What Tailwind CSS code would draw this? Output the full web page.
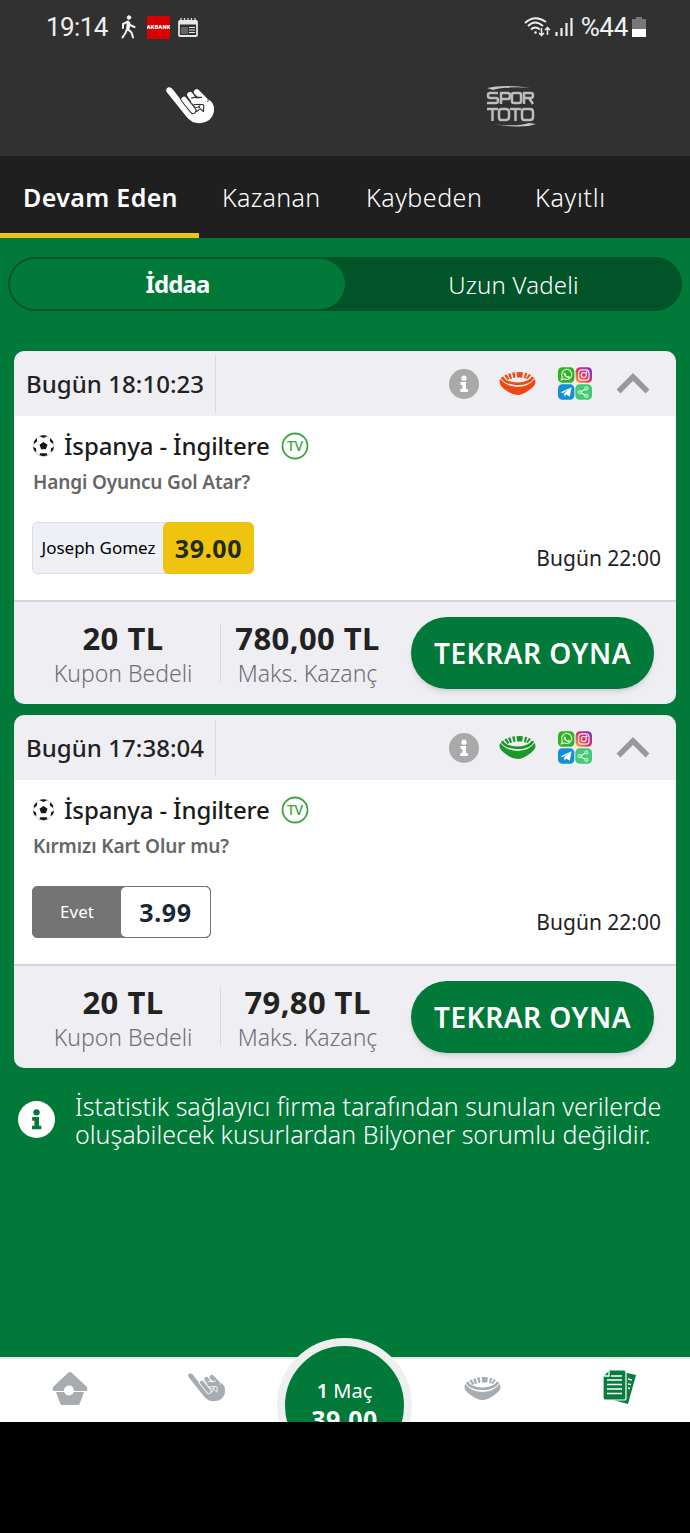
<!DOCTYPE html>
<html lang="tr">
<head>
<meta charset="utf-8">
<title>Kuponlarım</title>
<script src="https://cdn.jsdelivr.net/npm/@tailwindcss/browser@4"></script>
</head>
<body class="w-[690px] h-[1533px] overflow-hidden bg-black font-['Noto_Sans',sans-serif] whitespace-nowrap">
<svg class="absolute w-0 h-0">
  <symbol id="hand" viewBox="0 0 142 110">
    <path fill="currentColor" d="M1 14Q-2 3 7 1q7-1 12 5l33 42 30-8 25-15 10 6q26 12 26 37-3 35-42 40-25 1-41-20z"/>
    <g fill="none" stroke-linecap="round" stroke-linejoin="round">
      <path d="M91 15l24 24" stroke="var(--gap)" stroke-width="22"/><path d="M91 15l24 24" stroke="currentColor" stroke-width="17"/>
      <path d="M71 23l20 28" stroke="var(--gap)" stroke-width="22"/><path d="M71 23l20 28" stroke="currentColor" stroke-width="17"/>
      <path d="M53 36l27 34" stroke="var(--gap)" stroke-width="21"/><path d="M53 36l27 34" stroke="currentColor" stroke-width="15"/>
      <path d="M82 42h28l18 18-8 22" stroke="currentColor" stroke-width="15"/>
      <path d="M76 33q3-2 9-2h20M84 52h24q4 0 4 4l-1 17-9-8-5-7M88 73q6-1 10-6" stroke="var(--gap)" stroke-width="3.500"/>
    </g>
  </symbol>
  <symbol id="stadium" viewBox="0 0 108 68">
    <path fill="currentColor" d="M1 31q-1-7 3-10 14 22 50 23 36-1 50-23 4 3 3 11-1 10-19 22-18 14-34 14T20 54Q2 42 1 31z"/>
    <path d="M8 15q10 19 46 20 36-1 46-20" fill="none" stroke="currentColor" stroke-width="8"/>
    <path fill="currentColor" d="M15 11l6-4 9 13-5 4zM26 6l7-2 5 15-6 2zM38 2l8-1 2 16-6 1zM51 1q8-2 19 0l-2 15q-7 1-15 0zM76 2l7 2-5 15-5-1zM88 6l6 3-10 12-5-2z"/>
  </symbol>
  <symbol id="info" viewBox="0 0 30 30"><circle cx="15" cy="15" r="15" fill="currentColor"/><g fill="var(--gap)"><circle cx="15" cy="9.200" r="2.600"/><path d="M11.500 13h5.500v7h1.900v3h-7.600v-3h2v-4h-1.800z"/></g></symbol>
  <linearGradient id="ig" x1="0" y1="1" x2="1" y2="0"><stop offset="0" stop-color="#ffb13d"/><stop offset=".45" stop-color="#f02d63"/><stop offset="1" stop-color="#5b38d6"/></linearGradient>
  <symbol id="share" viewBox="0 0 102 98">
    <rect width="49" height="47" rx="13" fill="#2db51e"/><rect x="53" width="49" height="47" rx="13" fill="url(#ig)"/><rect y="51" width="49" height="47" rx="13" fill="#128fd8"/><rect x="52" y="51" width="50" height="47" rx="13" fill="#43ca73"/>
    <g fill="none" stroke="#e8f5e8" stroke-width="3.500"><path d="M10 38l3-9a15 15 0 1 1 6 6z"/><rect x="62" y="8" width="31" height="31" rx="9"/><circle cx="77.500" cy="23.500" r="7.500"/><path d="M66 75l18-10M66 75l18 11"/></g>
    <path d="M19 17q3-3 4 1l1 3-1 2q2 4 6 5l3-2 4 3q-2 6-9 3-9-5-10-11 0-3 2-4z" fill="#e8f5e8"/><circle cx="86" cy="15" r="2.500" fill="#fff"/>
    <path d="M8 75l33-15-6 29-10-7-5 6-2-9 17-14-21 13z" fill="#fff"/><g fill="#6fd894" stroke="#d5f5e0" stroke-width="3"><circle cx="65" cy="75" r="5"/><circle cx="85" cy="64" r="5"/><circle cx="85" cy="86" r="5"/></g>
  </symbol>
  <symbol id="ball" viewBox="0 0 66 66"><circle cx="33" cy="33" r="31" fill="#fff" stroke="#bbb" stroke-width="2"/><g fill="#161616"><path d="M33 21l12 8-5 14H26l-5-14z"/><path d="M21 3q12-4 24 0l-12 6zM4 22q2-8 9-12l1 9-9 8zM62 22q-2-8-9-12l-1 9 9 8zM6 48q-4-7-4-13l8 5 2 11zM60 48q4-7 4-13l-8 5-2 11zM23 55h20l2 6q-12 5-24 0z"/></g></symbol>
  <symbol id="chev" viewBox="0 0 34 22"><path d="M2.500 18.500L17 4l14.500 14.500" fill="none" stroke="#999" stroke-width="5.500"/></symbol>
</svg>

<header class="h-[156px] bg-[#313131] text-white">
  <div class="h-[54px] flex items-center pl-[46px] pr-[44px] font-[Roboto]">
    <span class="w-[62px] text-[26px] leading-[56px] tracking-[-0.6px] text-[#eee]">19:14</span>
    <svg class="ml-[13px] w-[15px] h-[24px]" viewBox="0 0 15 24" fill="none" stroke="#f2f2f2" stroke-width="2" stroke-linecap="round" stroke-linejoin="round"><circle cx="8" cy="2.500" r="1.800" fill="#f2f2f2" stroke-width="1"/><path d="M7 6.500L6 14l-1.500 4L1.500 22.500M6.500 14l4 3.500 1.500 5M2 13V9l5-2.500L9 10l4.500 2M8.500 8l-1 6" /></svg>
    <span class="ml-[11px] w-[23px] h-[23px] bg-[#d80000] text-white text-[6px] leading-[23px] font-black overflow-hidden flex justify-center"><span class="scale-y-75">AKBANK</span></span>
    <svg class="ml-[8px] w-[20px] h-[19px]" viewBox="0 0 20 19" fill="none" stroke="#e6e6e6"><rect x="1" y="3" width="18" height="15" rx="1" stroke-width="1.800"/><path d="M1 4.500h18" stroke-width="4"/><path d="M3 0v3M6.500 0v3M10 0v3M13.500 0v3M17 0v3" stroke-width="1.200"/><path d="M11 9.500h6M11 12h6M11 14.500h6" stroke-width="1.200"/><path d="M3 9h7v7H3z" stroke="none" fill="#666"/></svg>
    <span class="flex-1"></span>
    <svg class="w-[50px] h-[22px] mr-[7px]" viewBox="0 0 50 22" fill="none" stroke="#eee" stroke-width="1.900"><path d="M1 7Q11-2 22 6M4 10Q11 3 19 10M7 13.500q4-4 9 0"/><circle cx="11.500" cy="16.500" r="1.300" fill="#eee" stroke="none"/><path d="M17.500 12v7m-2.500-2l2.500 2.500L20 17M23.500 19v-7M21 14l2.500-2.500L26 14" stroke-width="1.500"/><path d="M32.500 20v-4M37.500 20v-8M42.500 20V7M47.500 20V2" stroke-width="2.200"/></svg>
    <span class="text-[26px] leading-[56px] tracking-[-0.3px] text-[#f2f2f2]">%44</span>
    <svg class="ml-[4px] w-[14px] h-[20px]" viewBox="0 0 14 20"><path d="M4 0h6v2h4v18H0V2h4z" fill="#777"/><path d="M0 12h14v8H0z" fill="#fff"/></svg>
  </div>
  <div class="h-[102px] flex items-start">
    <div class="w-1/2 pt-[33px] pl-[166px]"><svg class="w-[48px] h-[37px] [--gap:#313131]"><use href="#hand"/></svg></div>
    <div class="w-1/2 pt-[31px] pl-[141px]"><svg class="w-[51px] h-[43px]" viewBox="0 0 51 43"><path d="M1 3Q18-1 45 3 20 1 7 5zM50 39q-13 5-43 0 24 3 36-1z" fill="#c8c8c8"/><g fill="none" stroke="#bdbdbd" stroke-width="2.500" stroke-linejoin="round"><path d="M12 8H4Q2 8 2 10.500T4 13h6q2 0 2 2.500T10 18H1M15 19V8h7q2 0 2 3t-2 3h-7M28 8h5q2 0 2 2v6q0 2-2 2h-5q-2 0-2-2v-6q0-2 2-2zM38 19V8h7q2 0 2 2.500T45 13h-7m5 0l4 6M1 24h11M6.500 24v12M15 24h5q3 0 3 3v5q0 3-3 3h-5q-2 0-2-3v-5q0-3 2-3zM24 24h11M29.500 24v12M38 24h6q3 0 3 3v5q0 3-3 3h-6q-2 0-2-3v-5q0-3 2-3z"/></g></svg></div>
  </div>
</header>

<nav class="h-[82px] bg-[#1f1f1f] text-white text-[25px] leading-[82px] flex">
  <div class="w-[199px] h-[82px] pl-[23px] border-b-[5px] border-[#ecc31c] font-semibold tracking-[0.35px]">Devam Eden</div>
  <div class="pl-[23px] w-[143px] font-[350] tracking-[0.3px]">Kazanan</div>
  <div class="pl-[24px] w-[169px] font-[350] tracking-[0.5px]">Kaybeden</div>
  <div class="pl-[24px] font-[350] tracking-[0.7px]">Kayıtlı</div>
</nav>

<main class="h-[1119px] bg-[#007939] pt-[19px]">
  <div class="ml-2 w-[674px] h-[54px] rounded-full bg-[#005428] p-[2px] pr-0 flex text-white text-[24px] leading-[51px] text-center">
    <div class="w-[335px] h-[50px] rounded-full bg-[#007939] font-bold leading-[49px] tracking-[-0.9px]">İddaa</div>
    <div class="flex-1 font-[350] tracking-[0.2px]">Uzun Vadeli</div>
  </div>

  <section class="mt-[40px] ml-[14px] w-[662px] h-[353px] rounded-[10px] bg-[#efeef3] overflow-hidden text-[#222]">
    <div class="h-[65px] flex items-center pl-[12px] pr-[26px]">
      <span class="w-[189px] text-[24px] font-medium leading-[64px] tracking-[0.05px]">Bugün 18:10:23</span>
      <i class="w-px h-[57px] bg-[#d9d8df]"></i><span class="flex-1"></span>
      <svg class="w-[30px] h-[30px] text-[#a9a9a9] [--gap:#fff]"><use href="#info"/></svg>
      <svg class="ml-[20px] w-[37px] h-[23px] text-[#f0490f]"><use href="#stadium"/></svg>
      <svg class="ml-[22px] w-[34px] h-[33px]"><use href="#share"/></svg>
      <svg class="ml-[24px] w-[34px] h-[22px]"><use href="#chev"/></svg>
    </div>
    <div class="h-[184px] bg-white pl-[18px] pr-[15px] pt-[12px]">
      <div class="flex h-[36px] items-center"><svg class="w-[23px] h-[22px]"><use href="#ball"/></svg><span class="ml-[9px] w-[217px] text-[24px] font-medium tracking-[-0.13px] text-[#1b1b1b]">İspanya - İngiltere</span><svg class="w-[28px] h-[28px]" viewBox="0 0 28 28"><circle cx="14" cy="14" r="12.500" fill="none" stroke="#3da53d" stroke-width="1.800"/><text x="14" y="19" text-anchor="middle" textLength="16" font-family="Noto Sans" font-size="14" font-weight="500" fill="#3da53d">TV</text></svg></div>
      <div class="pl-px h-[58px] leading-[36px] text-[19px] font-semibold tracking-[-0.15px] text-[#666]">Hangi Oyuncu Gol Atar?</div>
      <div class="flex justify-between">
        <div class="w-[222px] h-[52px] flex border border-[#dcdce3] rounded-[5px] bg-[#efeff6] leading-[50px] text-center"><span class="flex-1 text-[17px] text-black">Joseph Gomez</span><span class="-m-px w-[91px] h-[52px] leading-[52px] rounded-[6px] bg-[#efc40f] text-[25px] font-bold tracking-[0.7px] text-[#222b16]">39.00</span></div>
        <span class="pt-[9px] text-[21px] leading-[54px]">Bugün 22:00</span>
      </div>
    </div>
    <div class="h-[104px] border-t-2 border-[#d4d3de] flex items-center pr-[22px]">
      <div class="w-[206px] pl-[12px] pt-[4px] text-center"><div class="text-[31px] leading-[35px] font-bold tracking-[0.5px]">20 TL</div><div class="text-[23px] leading-[34px] font-[350] text-[#6f6f74]">Kupon Bedeli</div></div>
      <i class="w-px h-[58px] bg-[#d9d8df]"></i>
      <div class="w-[173px] pt-[4px] text-center"><div class="text-[31px] leading-[35px] font-bold tracking-[0.4px]">780,00 TL</div><div class="text-[23px] leading-[34px] font-[350] text-[#6f6f74]">Maks. Kazanç</div></div>
      <div class="ml-[17px] w-[243px] h-[72px] rounded-full bg-[#007939] shadow-md text-white text-center text-[28px] leading-[73px] font-semibold tracking-[0.5px]">TEKRAR OYNA</div>
    </div>
  </section>

  <section class="mt-[11px] ml-[14px] w-[662px] h-[353px] rounded-[10px] bg-[#efeef3] overflow-hidden text-[#222]">
    <div class="h-[65px] flex items-center pl-[12px] pr-[26px]">
      <span class="w-[189px] text-[24px] font-medium leading-[64px] tracking-[0.05px]">Bugün 17:38:04</span>
      <i class="w-px h-[57px] bg-[#d9d8df]"></i><span class="flex-1"></span>
      <svg class="w-[30px] h-[30px] text-[#a9a9a9] [--gap:#fff]"><use href="#info"/></svg>
      <svg class="ml-[20px] w-[37px] h-[23px] text-[#1c982b]"><use href="#stadium"/></svg>
      <svg class="ml-[22px] w-[34px] h-[33px]"><use href="#share"/></svg>
      <svg class="ml-[24px] w-[34px] h-[22px]"><use href="#chev"/></svg>
    </div>
    <div class="h-[184px] bg-white pl-[18px] pr-[15px] pt-[12px]">
      <div class="flex h-[36px] items-center"><svg class="w-[23px] h-[22px]"><use href="#ball"/></svg><span class="ml-[9px] w-[217px] text-[24px] font-medium tracking-[-0.13px] text-[#1b1b1b]">İspanya - İngiltere</span><svg class="w-[28px] h-[28px]" viewBox="0 0 28 28"><circle cx="14" cy="14" r="12.500" fill="none" stroke="#3da53d" stroke-width="1.800"/><text x="14" y="19" text-anchor="middle" textLength="16" font-family="Noto Sans" font-size="14" font-weight="500" fill="#3da53d">TV</text></svg></div>
      <div class="pl-px h-[58px] leading-[36px] text-[19px] font-semibold tracking-[-0.1px] text-[#666]">Kırmızı Kart Olur mu?</div>
      <div class="flex justify-between">
        <div class="w-[179px] h-[52px] flex border border-[#747474] rounded-[5px] bg-[#747474] leading-[50px] text-center"><span class="flex-1 text-[17px] text-white">Evet</span><span class="w-[89px] h-[50px] leading-[50px] rounded-[5px] bg-white text-[25px] font-bold tracking-[0.7px] text-[#1a2733]">3.99</span></div>
        <span class="pt-[9px] text-[21px] leading-[54px]">Bugün 22:00</span>
      </div>
    </div>
    <div class="h-[104px] border-t-2 border-[#d4d3de] flex items-center pr-[22px]">
      <div class="w-[206px] pl-[12px] pt-[4px] text-center"><div class="text-[31px] leading-[35px] font-bold tracking-[0.5px]">20 TL</div><div class="text-[23px] leading-[34px] font-[350] text-[#6f6f74]">Kupon Bedeli</div></div>
      <i class="w-px h-[58px] bg-[#d9d8df]"></i>
      <div class="w-[173px] pt-[4px] text-center"><div class="text-[31px] leading-[35px] font-bold tracking-[0.4px]">79,80 TL</div><div class="text-[23px] leading-[34px] font-[350] text-[#6f6f74]">Maks. Kazanç</div></div>
      <div class="ml-[17px] w-[243px] h-[72px] rounded-full bg-[#007939] shadow-md text-white text-center text-[28px] leading-[73px] font-semibold tracking-[0.5px]">TEKRAR OYNA</div>
    </div>
  </section>

  <div class="mt-[23px] ml-[18px] flex items-center text-white">
    <svg class="w-[37px] h-[37px] [--gap:#007939]"><use href="#info"/></svg>
    <p class="ml-[20px] pt-px text-[25px] leading-[28px] font-light">İstatistik sağlayıcı firma tarafından sunulan verilerde<br>oluşabilecek kusurlardan Bilyoner sorumlu değildir.</p>
  </div>
</main>

<footer class="relative h-[65px] bg-white border-t-2 border-[#e3e6e5] flex items-start text-[#a7acb0] [--gap:#fff]">
  <svg class="mt-[13px] ml-[52px] w-[36px] h-[33px]" viewBox="0 0 36 33" fill="currentColor"><path d="M18 0Q19 0 20 1L35 15q1 4-1 4H2q-2 0-1-4L16 1q1-1 2-1z"/><path d="M4 20h28l-4 11q-.500 2-2 2H10q-1.500 0-2-2z"/><circle cx="17" cy="18.500" r="5" fill="#fff"/></svg>
  <svg class="mt-[14px] ml-[100px] w-[37px] h-[29px]"><use href="#hand"/></svg>
  <svg class="mt-[18px] ml-[239px] w-[37px] h-[23px]"><use href="#stadium"/></svg>
  <svg class="mt-[11px] ml-[102px] w-[34px] h-[35px]" viewBox="0 0 34 35"><path d="M20 2l13 3-8 29-15-4z" fill="#0a7c40"/><path d="M6 0h15q2 0 2 2v26q0 2-2 2H2q-2 0-2-2V6z" fill="#0a7c40" stroke="#fff" stroke-width="1.200"/><path d="M1 6h5V1M4 10h15M8 6h11M4 14.500h15M4 19h15M4 23.500h15M25 9l4 1M25 14l3 .6M25 18l2 .5" stroke="#fff" stroke-width="1.300" fill="none"/></svg>
  <div class="absolute left-[277px] -top-[21px] w-[135px] h-[84px] overflow-hidden">
    <div class="w-[135px] h-[135px] rounded-full border-[8.500px] border-[#eeefef] bg-[#007939] text-white text-center pt-[31px]">
      <div class="text-[20px] leading-[28px]"><b class="font-semibold">1</b> Maç</div>
      <div class="text-[25px] leading-[29px] font-bold tracking-[0.5px]">39.00</div>
    </div>
  </div>
</footer>
</body>
</html>
